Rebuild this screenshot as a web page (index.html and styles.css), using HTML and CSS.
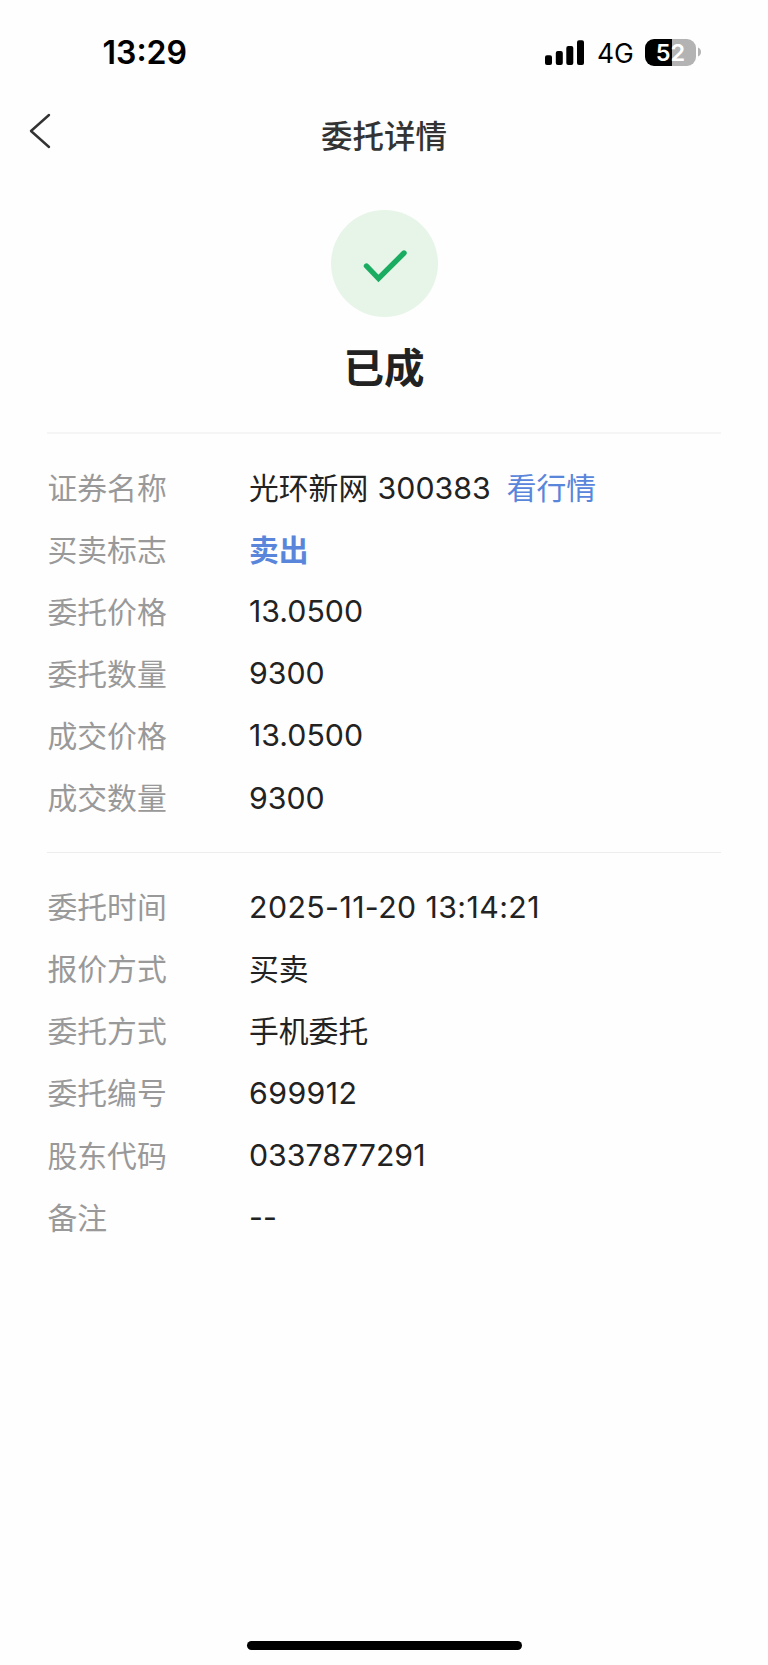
FILE: index.html
```html
<!DOCTYPE html>
<html lang="zh-CN">
<head>
<meta charset="utf-8">
<title>委托详情</title>
<link rel="stylesheet" href="styles.css">
</head>
<body>
<div class="screen">
  <div class="status">
    <span class="time">13:29</span>
    <div class="indicators">
      <svg class="signal" width="40" height="26" viewBox="0 0 40 26"><rect x="0" y="15.2" width="7" height="9.8" rx="2"/><rect x="10.8" y="11" width="7" height="14" rx="2"/><rect x="21.3" y="6" width="7" height="19" rx="2"/><rect x="32" y="0.3" width="7" height="24.7" rx="2"/></svg>
      <span class="net">4G</span>
      <div class="battery"><span class="level"><b>5</b><b>2</b></span><svg class="cap" width="5" height="10" viewBox="0 0 5 10"><path d="M1 0.5C5 2 5 8 1 9.5Z"/></svg></div>
    </div>
  </div>
  <header class="nav">
    <svg class="back" width="24" height="38" viewBox="0 0 24 38"><path d="M21 3 L3 19 L21 35"/></svg>
    <h1 class="title">委托详情</h1>
  </header>
  <section class="result">
    <div class="badge"><svg width="107" height="107" viewBox="0 0 107 107"><path d="M35.5 56 L47.5 68.5 L73 43"/></svg></div>
    <h2 class="state">已成</h2>
  </section>
  <main class="details">
    <dl class="group">
      <div class="row"><dt>证券名称</dt><dd class="text">光环新网 <span class="num code">300383</span><a class="link">看行情</a></dd></div>
      <div class="row"><dt>买卖标志</dt><dd class="text sell">卖出</dd></div>
      <div class="row"><dt>委托价格</dt><dd class="num">13.0500</dd></div>
      <div class="row"><dt>委托数量</dt><dd class="num">9300</dd></div>
      <div class="row"><dt>成交价格</dt><dd class="num">13.0500</dd></div>
      <div class="row"><dt>成交数量</dt><dd class="num">9300</dd></div>
    </dl>
    <dl class="group">
      <div class="row"><dt>委托时间</dt><dd class="num date">2025-11-20 13:14:21</dd></div>
      <div class="row"><dt>报价方式</dt><dd class="text">买卖</dd></div>
      <div class="row"><dt>委托方式</dt><dd class="text">手机委托</dd></div>
      <div class="row"><dt>委托编号</dt><dd class="num serial">699912</dd></div>
      <div class="row"><dt>股东代码</dt><dd class="num">0337877291</dd></div>
      <div class="row"><dt>备注</dt><dd class="num">--</dd></div>
    </dl>
  </main>
  <div class="home"></div>
</div>
</body>
</html>
```
FILE: styles.css
```css
* { box-sizing: border-box; margin: 0; padding: 0; }
body { background: #fefefe; color: #222; font-family: Inter, "Noto Sans CJK SC", sans-serif; }
.screen { display: flex; flex-direction: column; width: 768px; height: 1665px; }
.status { display: flex; justify-content: space-between; height: 104px; padding: 33px 66px 0 102.5px; color: #000; }
.time { font-size: 32px; font-weight: 600; line-height: 40px; }
.indicators { display: flex; align-items: center; height: 40px; }
.signal { margin-top: -1px; }
.net { margin-left: 12px; width: 48px; font-size: 26.5px; line-height: 40px; }
.battery { display: flex; align-items: center; gap: 1px; margin-top: -2px; }
.level { display: flex; justify-content: center; width: 51px; height: 27px; border-radius: 9px; background: linear-gradient(90deg, #000 52%, #b3b3b3 52%); color: #fff; font-size: 23.5px; line-height: 27px; }
.level b { font-weight: 600; }
.cap { fill: #b3b3b3; }
.nav { display: grid; grid-template-columns: 100px 1fr 100px; align-items: center; height: 64px; }
.back { margin: -10px 0 0 27.5px; fill: none; stroke: #333; stroke-width: 2.4; stroke-linecap: round; stroke-linejoin: round; }
.title { padding-top: 2px; color: #333; font-size: 31.5px; font-weight: 500; line-height: 46px; text-align: center; }
.result { display: flex; flex-direction: column; align-items: center; height: 264px; padding-top: 42px; }
.badge { width: 107px; height: 107px; border-radius: 50%; background: #e7f5e9; }
.badge svg { display: block; fill: none; stroke: #1aad61; stroke-width: 5.4; stroke-linecap: round; }
.state { margin-top: 22px; font-size: 40.5px; font-weight: 700; line-height: 60px; }
.details { padding: 0 47px; }
.group { height: 419.6px; padding-top: 22px; border-top: 2px solid #f5f5f5; }
.group + .group { padding-top: 23px; border-top: 1px solid #ededed; }
.row { display: flex; align-items: center; height: 62.1px; font-size: 29.8px; line-height: 44px; }
.row dt { width: 202px; padding: 1px 0 0 0.5px; color: #999; font-weight: 400; }
.text { padding-top: 1px; }
.num { font-size: 30.3px; }
.date, .serial { letter-spacing: 0.4px; }
.code { margin: 0 16px 0 1px; }
.link { color: #5986db; }
.sell { color: #5986db; font-weight: 700; }
.home { width: 275px; height: 9px; margin: auto auto 15px; border-radius: 5px; background: #000; }
```
